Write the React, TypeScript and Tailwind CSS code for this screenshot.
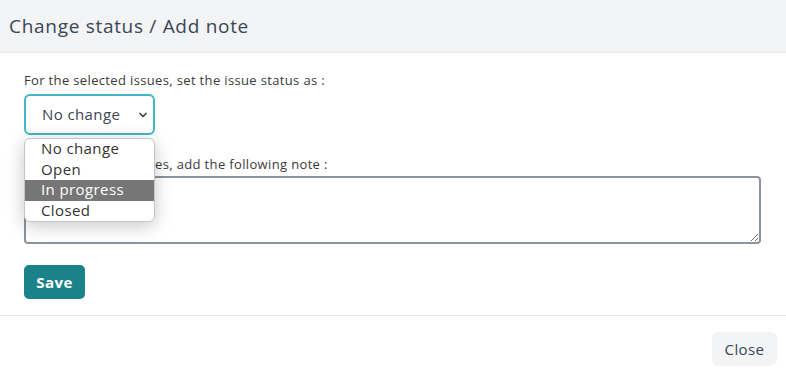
import { ChevronDown } from "lucide-react";

const options = ["No change", "Open", "In progress", "Closed"];

const App = () => {
  return (
    <div className="w-[786px] h-[373px] bg-white text-[#333] font-['Open_Sans',sans-serif]">
      <div className="h-[53px] bg-[#f3f4f6] border-b border-[#e8e9ec] flex items-center px-[9px]">
        <h1 className="text-[19px] tracking-[0.7px] text-[#3b4654]">Change status / Add note</h1>
      </div>
      <div className="px-6 pt-[18px] pb-4 border-b border-[#e8e9ec] flex flex-col">
        <label className="text-[13px] tracking-[0.35px] leading-[18px] text-[#3a3a3a]">
          For the selected issues, set the issue status as :
        </label>
        <div className="relative mt-[5px] w-[131px]">
          <div className="h-[41px] rounded-md border-2 border-[#3fb8c4] flex items-center justify-between pl-4 pr-[4px]">
            <span className="text-[15px] tracking-[0.4px] text-[#3b4654]">No change</span>
            <ChevronDown size={12} strokeWidth={3.5} className="text-[#3b4654]" />
          </div>
          <div className="absolute left-0 top-[44px] w-[131px] bg-white border border-[#c4c4c4] rounded-md shadow-[0_4px_18px_rgba(0,0,0,0.22)] overflow-hidden z-10">
            {options.map((o) => (
              <div
                key={o}
                className={
                  o === "In progress"
                    ? "h-[20.5px] leading-[19px] pl-4 text-[15px] tracking-[0.4px] bg-[#767676] text-white"
                    : "h-[20.5px] leading-[19px] pl-4 text-[15px] tracking-[0.4px] text-[#333]"
                }
              >
                {o}
              </div>
            ))}
          </div>
        </div>
        <label className="mt-[20px] text-[13px] tracking-[0.35px] leading-[18px] text-[#3a3a3a]">
          For the selected issues, add the following note :
        </label>
        <textarea className="mt-[3px] h-[68px] w-[737px] border-2 border-[#8b949e] rounded-[4px] outline-none" />
        <div className="mt-[21px]">
          <button className="h-[34px] w-[61px] rounded-[5px] bg-[#1b8289] text-white text-[15px] tracking-[0.4px] font-bold">
            Save
          </button>
        </div>
      </div>
      <div className="flex justify-end pt-4 pr-[9px]">
        <button className="h-[34px] w-[65px] rounded-md bg-[#f3f4f6] text-[15px] tracking-[0.4px] text-[#3b4654]">
          Close
        </button>
      </div>
    </div>
  );
};

export default App;
